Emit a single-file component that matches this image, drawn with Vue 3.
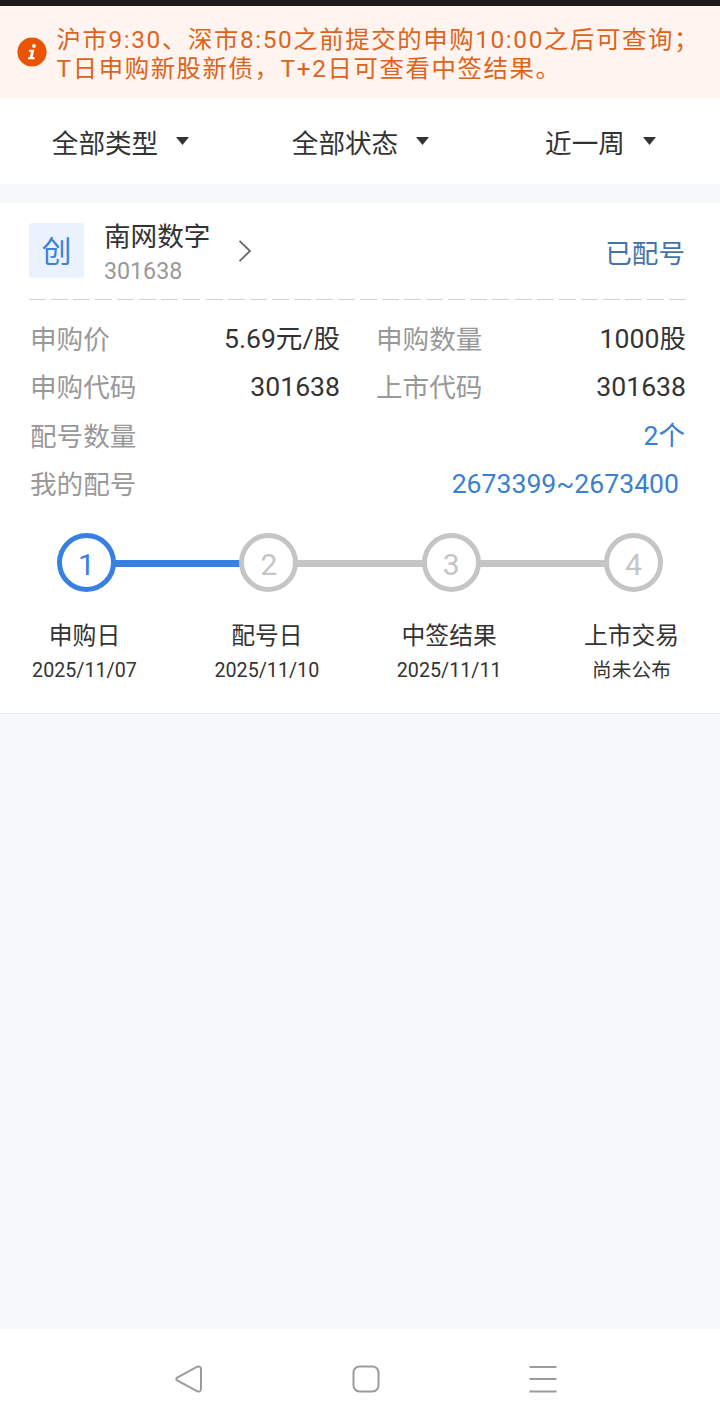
<script setup>
const filters = ['全部类型', '全部状态', '近一周']
const rows = [
  [{ k: '申购价', v: '5.69元/股' }, { k: '申购数量', v: '1000股' }],
  [{ k: '申购代码', v: '301638' }, { k: '上市代码', v: '301638' }],
]
const steps = [
  { n: 1, label: '申购日', date: '2025/11/07', done: true },
  { n: 2, label: '配号日', date: '2025/11/10' },
  { n: 3, label: '中签结果', date: '2025/11/11' },
  { n: 4, label: '上市交易', date: '尚未公布' },
]
</script>

<template>
  <div class="page">
    <div class="status-strip"></div>
    <div class="notice">
      <svg class="info" viewBox="0 0 30 30" width="30" height="30">
        <circle cx="15" cy="15" r="14.6" fill="#e95504" />
        <circle cx="16.9" cy="8.9" r="1.9" fill="#fff" />
        <path d="M12.2 12.7h5.1l-1.6 7.6h1.9v1.9h-6.6v-1.9h1.9l1.1-5.6h-2.1z" fill="#fff" />
      </svg>
      <div class="notice-text">
        <div>沪市9:30、深市8:50之前提交的申购10:00之后可查询；</div>
        <div>T日申购新股新债，T+2日可查看中签结果。</div>
      </div>
    </div>

    <div class="filters">
      <div v-for="f in filters" :key="f" class="filter">
        <span>{{ f }}</span>
        <svg width="13" height="8" viewBox="0 0 13 8"><path d="M0 0h13L6.5 8z" fill="#333" /></svg>
      </div>
    </div>

    <div class="card">
      <div class="head">
        <div class="tag">创</div>
        <div class="names">
          <div class="name">南网数字</div>
          <div class="code">301638</div>
        </div>
        <svg class="chevron" width="14" height="24" viewBox="0 0 14 24">
          <path d="M1.5 1.8L12 12 1.5 22.2" fill="none" stroke="#666" stroke-width="1.8" />
        </svg>
        <div class="state">已配号</div>
      </div>
      <div class="dashes"></div>

      <div class="info-rows">
        <div v-for="(r, i) in rows" :key="i" class="row">
          <div v-for="c in r" :key="c.k" class="cell">
            <span class="key">{{ c.k }}</span><span>{{ c.v }}</span>
          </div>
        </div>
        <div class="row"><div class="cell count"><span class="key">配号数量</span><span class="blue">2个</span></div></div>
        <div class="row"><div class="cell numbers"><span class="key">我的配号</span><span class="blue">2673399~2673400</span></div></div>
      </div>

      <div class="track">
        <template v-for="(s, i) in steps" :key="s.n">
          <div class="dot" :class="{ done: s.done }">{{ s.n }}</div>
          <div v-if="i < steps.length - 1" class="line" :class="{ done: s.done }"></div>
        </template>
      </div>
      <div class="labels">
        <div v-for="s in steps" :key="s.n" class="step">
          <div class="label">{{ s.label }}</div>
          <div class="date">{{ s.date }}</div>
        </div>
      </div>
    </div>

    <div class="nav">
      <svg width="28" height="28" viewBox="0 0 28 28" fill="none" stroke="#9b9b9b" stroke-width="2">
        <path d="M2.2 12.6L22.3 1.7Q25.8 0.7 26 4V24Q25.8 27.3 22.3 26.3L2.2 15.4Q0.4 14 2.2 12.6Z" />
      </svg>
      <svg width="28" height="28" viewBox="0 0 28 28" fill="none" stroke="#9b9b9b" stroke-width="2">
        <rect x="1.5" y="1.5" width="25" height="25" rx="6" />
      </svg>
      <svg width="28" height="28" viewBox="0 0 28 28" fill="none" stroke="#9b9b9b" stroke-width="2">
        <path d="M0.5 2H27.5M0.5 14H27.5M0.5 26.5H27.5" />
      </svg>
    </div>
  </div>
</template>

<style>
body {
  background: #f7f8fa;
}
</style>

<style scoped>
.page {
  box-sizing: border-box;
  width: 720px;
  height: 1428px;
  display: flex;
  flex-direction: column;
  overflow: hidden;
  background: #f7f8fa;
  color: #333;
  font-family: Roboto, 'Noto Sans CJK SC', sans-serif;
  font-size: 26.6px;
  white-space: nowrap;
}
.page * {
  box-sizing: border-box;
}
.status-strip {
  height: 6px;
  background: #1c1c1c;
}
.notice {
  height: 92px;
  display: flex;
  padding: 19px 0 0 16.5px;
  background: #fff4ef;
  color: #dc6420;
}
.info {
  margin-top: 12px;
}
.notice-text {
  margin: 0 0 0 10px;
  font-size: 24.4px;
  line-height: 29px;
  letter-spacing: 1.6px;
}
.filters {
  height: 86px;
  display: grid;
  grid-template-columns: repeat(3, 1fr);
  background: #fff;
  line-height: 40px;
}
.filter {
  display: flex;
  align-items: center;
  justify-content: center;
  gap: 18px;
  padding: 5px 0 0 1px;
}
.filter svg {
  margin-bottom: 5px;
}
.card {
  height: 511px;
  margin-top: 19px;
  background: #fff;
  border-bottom: 1px solid #e8eaed;
}
.head {
  height: 96px;
  display: flex;
  padding: 20px 35px 0 29px;
}
.tag {
  width: 55px;
  height: 55px;
  border-radius: 3px;
  background: #e9f2fd;
  color: #3c82d8;
  font-size: 30px;
  line-height: 57px;
  text-align: center;
}
.names {
  margin: -2px 0 0 20px;
}
.name {
  line-height: 32px;
}
.code {
  margin-top: 4px;
  font-size: 23.2px;
  line-height: 28px;
  color: #999;
}
.chevron {
  margin: 16px 0 0 27.5px;
}
.state {
  margin-left: auto;
  line-height: 62px;
  color: #4572a8;
}
.dashes {
  height: 1px;
  margin: 0 34px 0 29px;
  background: repeating-linear-gradient(90deg, #d2d2d2 0 17px, transparent 17px 22.07px);
}
.info-rows {
  padding: 15px 34px 0 30px;
}
.row {
  display: flex;
  gap: 36px;
  height: 48.3px;
  line-height: 48.3px;
}
.cell {
  flex: 1;
  display: flex;
  justify-content: space-between;
}
.count {
  padding-right: 1px;
}
.numbers {
  padding-right: 7px;
}
.key {
  padding-top: 1px;
  color: #999;
}
.blue {
  color: #3a80cf;
}
.track {
  display: flex;
  align-items: center;
  height: 59px;
  margin: 25px 57px 0;
}
.dot {
  width: 59px;
  height: 59px;
  border: 5.5px solid #c5c5c5;
  border-radius: 50%;
  color: #c5c5c5;
  font-size: 30px;
  line-height: 53px;
  text-align: center;
}
.line {
  flex: 1;
  height: 7px;
  margin: 2px -1px 0;
  background: #c5c5c5;
}
.dot.done {
  border-color: #3780df;
  color: #3780df;
}
.line.done {
  background: #3780df;
}
.labels {
  display: flex;
  justify-content: space-between;
  margin-top: 27px;
  padding: 0 36px 0 32px;
}
.step {
  width: 105px;
  display: flex;
  flex-direction: column;
  align-items: center;
}
.label {
  font-size: 23.8px;
  line-height: 34px;
}
.date {
  font-size: 19.7px;
  line-height: 35px;
}
.nav {
  height: 99px;
  margin-top: auto;
  display: flex;
  gap: 149px;
  padding: 35.5px 0 0 174.5px;
  background: #fff;
}
</style>
